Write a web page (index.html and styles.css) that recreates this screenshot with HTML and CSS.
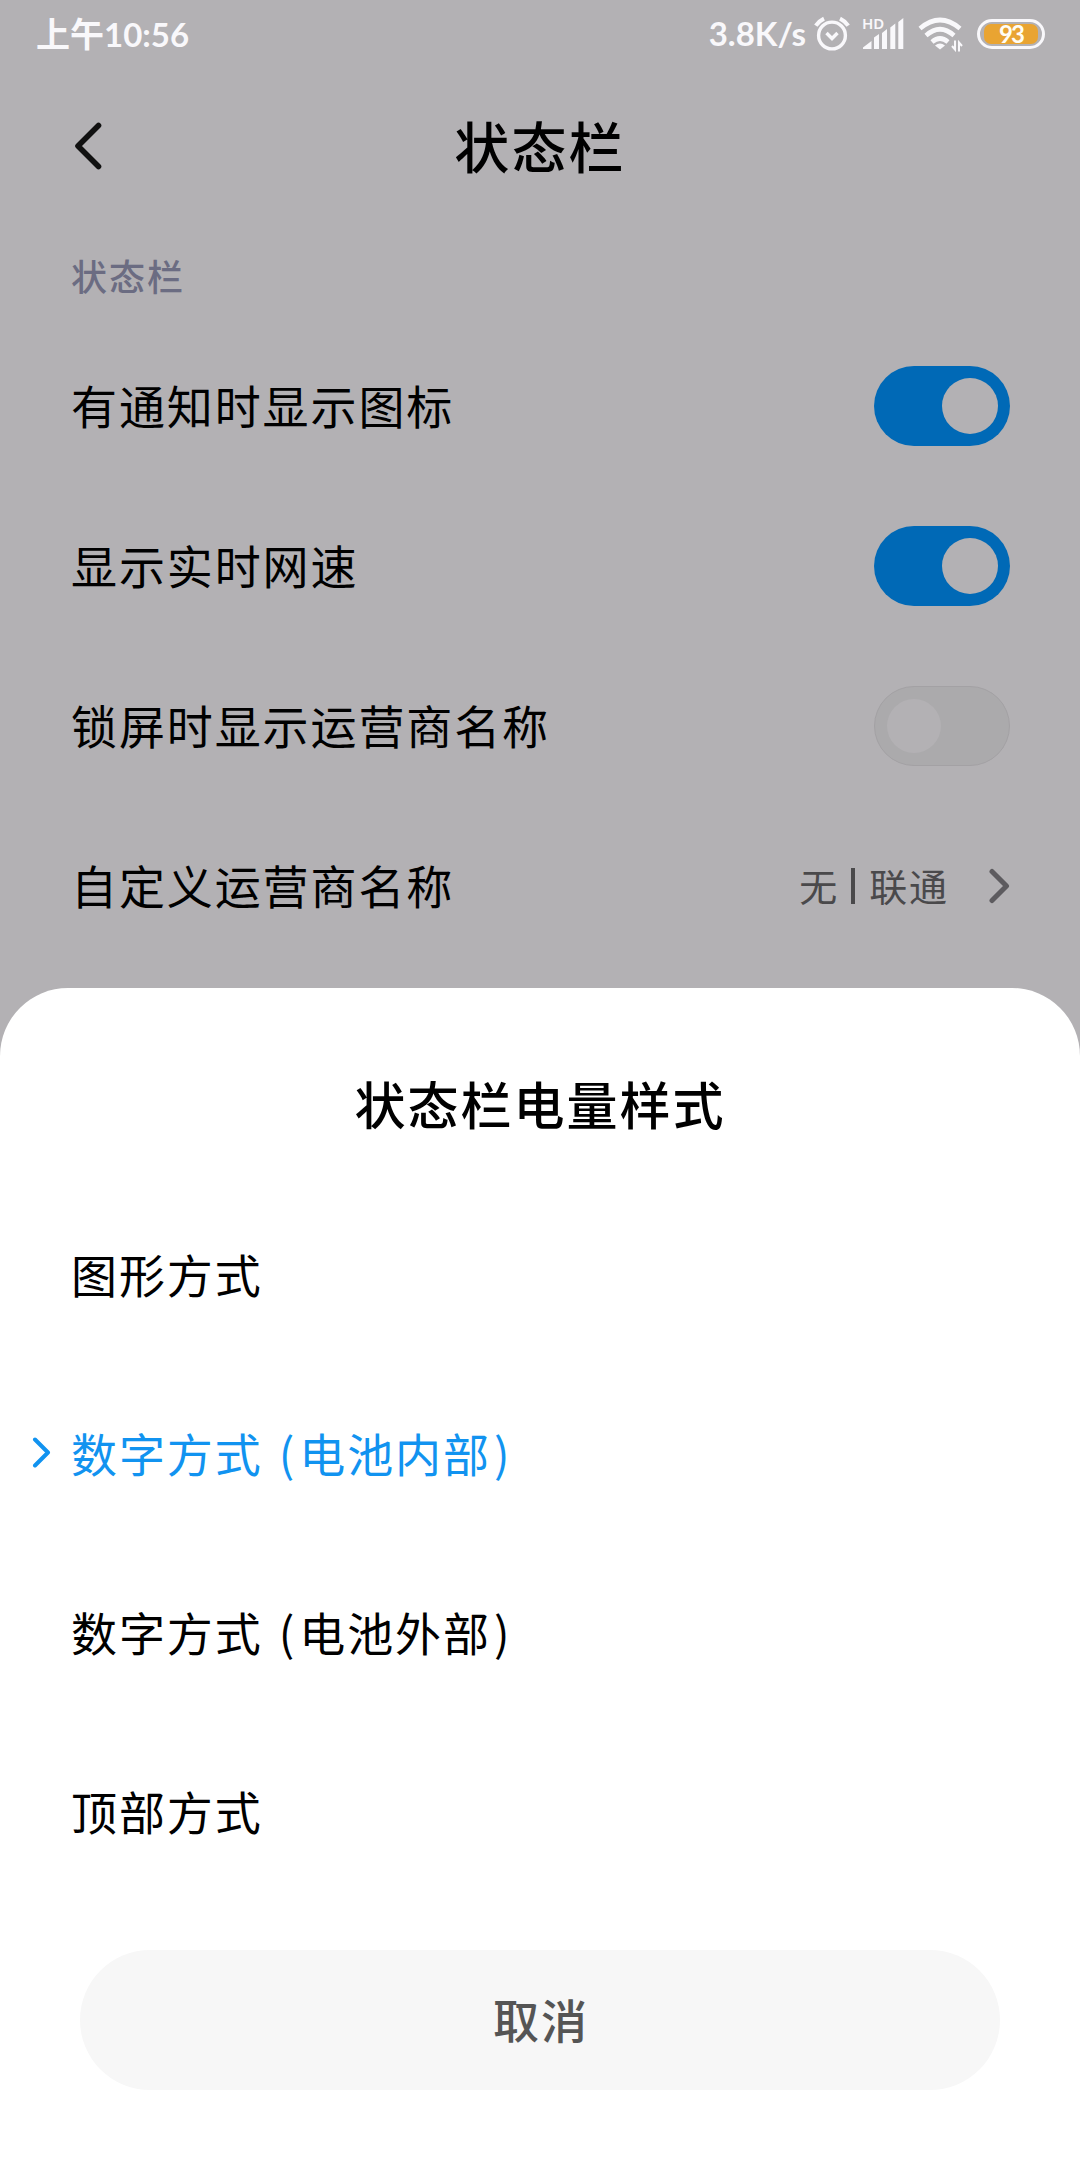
FILE: index.html
```html
<!DOCTYPE html>
<html lang="zh-CN">
<head>
    <meta charset="UTF-8">
    <meta name="viewport" content="width=device-width, initial-scale=1.0">
    <title>状态栏</title>
    <link rel="stylesheet" href="styles.css">
</head>
<body>
    <div class="status-bar">
        <span class="time">上午<span class="digits">10:56</span></span>
        <div class="status-icons">
            <span class="speed">3.8K/s</span>
            <svg class="icon-alarm" width="36" height="36" viewBox="0 0 36 36" fill="none" stroke="#f9f8fb" stroke-width="3.4">
                <circle cx="18" cy="19.5" r="13.4"/>
                <path d="M12.500 17l5.500 5.500 5.500-5.500"/>
                <path d="M1.800 9.600Q5 5 10 2.600M34.200 9.600Q31 5 26 2.600" stroke-width="4"/>
            </svg>
            <div class="signal">
                <span class="hd">HD</span>
                <svg width="42" height="32" viewBox="0 0 42 32" fill="#f9f8fb">
                    <path d="M1 31v-1.500L9.500 23v8zM12 31V19.500l5-3.500v15zM20 31V15l5-4v20zM28.300 31V9.500l5-4V31zM36.300 31V4l5-4v31z"/>
                </svg>
            </div>
            <svg class="icon-wifi" width="46" height="36" viewBox="0 0 46 36" fill="none" stroke="#f9f8fb" stroke-width="4.600">
                <path d="M3 12.500Q23-4.500 43 12.500M9 19.500Q23 7 37 19.500M15 26Q23 19 31 26"/>
                <path d="M18 29.500Q23 25.500 28 29.500L23 33.500z" fill="#f9f8fb" stroke="none"/>
                <path d="M38 24.500v9l-3-3.500M42 35.500v-9l3 3.500" stroke-width="2"/>
            </svg>
            <div class="battery"><span class="level">93</span></div>
        </div>
    </div>

    <div class="header">
        <svg class="back" width="32" height="52" viewBox="0 0 32 52" fill="none" stroke="#111" stroke-width="5.600" stroke-linecap="round" stroke-linejoin="round">
            <path d="M26.500 5.500L6 26l20.500 20.500"/>
        </svg>
        <h1>状态栏</h1>
    </div>

    <div class="settings">
        <div class="group-title">状态栏</div>
        <div class="row">
            <span class="label">有通知时显示图标</span>
            <div class="switch on"><div class="knob"></div></div>
        </div>
        <div class="row">
            <span class="label">显示实时网速</span>
            <div class="switch on"><div class="knob"></div></div>
        </div>
        <div class="row">
            <span class="label">锁屏时显示运营商名称</span>
            <div class="switch"><div class="knob"></div></div>
        </div>
        <div class="row">
            <span class="label">自定义运营商名称</span>
            <div class="value">
                <span class="label">无</span><i class="divider"></i><span class="label">联通</span>
                <svg class="arrow" width="22" height="36" viewBox="0 0 22 36" fill="none" stroke="#5d5b5f" stroke-width="5" stroke-linecap="round" stroke-linejoin="round">
                    <path d="M4 3.500L18.500 18 4 32.500"/>
                </svg>
            </div>
        </div>
    </div>

    <div class="sheet">
        <h2>状态栏电量样式</h2>
        <div class="option">图形方式</div>
        <div class="option selected">
            <svg class="mark" width="20" height="32" viewBox="0 0 20 32" fill="none" stroke="#1193f0" stroke-width="4" stroke-linecap="round" stroke-linejoin="round">
                <path d="M4 2.500L17 15.500 4 28.500"/>
            </svg>
            数字方式 <span class="paren">(</span>电池内<span class="paren">部</span>)
        </div>
        <div class="option">数字方式 <span class="paren">(</span>电池外<span class="paren">部</span>)</div>
        <div class="option">顶部方式</div>
        <button class="cancel">取消</button>
    </div>
</body>
</html>
```
FILE: styles.css
```css
* {
    margin: 0;
    padding: 0;
    box-sizing: border-box;
}
body {
    position: relative;
    width: 1080px;
    height: 2160px;
    overflow: hidden;
    background-color: #b3b1b4;
    color: #000;
    font-family: "Noto Sans CJK SC", sans-serif;
}
.status-bar {
    display: flex;
    justify-content: space-between;
    height: 68px;
    padding: 0 35px 0 36px;
    color: #f9f8fb;
    align-items: center;
}
.time {
    padding-bottom: 2px;
    font-size: 34px;
    font-weight: 700;
    line-height: 64px;
}
.digits, .speed {
    font-family: Lato, sans-serif;
    font-size: 33px;
    font-weight: 700;
}
.status-icons {
    display: flex;
    align-items: center;
    height: 66px;
}
.speed {
    padding-bottom: 2px;
    margin-right: 8px;
}
.signal {
    position: relative;
    display: flex;
    margin-left: 12px;
    margin-right: 13px;
}
.hd {
    position: absolute;
    left: 0;
    top: -4px;
    font-family: "Noto Sans", sans-serif;
    font-size: 15px;
    font-weight: 600;
    line-height: 18px;
}
.battery {
    display: flex;
    width: 68px;
    height: 30px;
    margin-left: 14px;
    padding: 2px 4px;
    border: 3px solid #f9f8fb;
    border-radius: 15px;
}
.level {
    flex: 1;
    background-color: #e9a432;
    border-radius: 7px;
    color: #fffdf5;
    font-family: Lato, sans-serif;
    font-size: 24px;
    font-weight: 700;
    line-height: 20px;
    letter-spacing: -2px;
    text-align: center;
}
.header {
    display: flex;
    align-items: center;
    height: 156px;
    padding: 0 72px;
}
.back {
    flex: none;
}
h1 {
    flex: 1;
    margin-right: 32px;
    padding-bottom: 5px;
    font-size: 55px;
    font-weight: 500;
    letter-spacing: 2.2px;
    text-align: center;
}
.settings {
    padding: 0 70px 0 71px;
}
.group-title {
    height: 102px;
    font-size: 36px;
    font-weight: 500;
    line-height: 102px;
    letter-spacing: 2px;
    color: #6b6c82;
}
.row {
    display: flex;
    align-items: center;
    justify-content: space-between;
    height: 160px;
    font-size: 46px;
    letter-spacing: 1.9px;
}
.label {
    padding-bottom: 4px;
}
.switch {
    width: 136px;
    height: 80px;
    padding: 12px;
    border: 1px solid #a3a1a4;
    border-radius: 40px;
    background-color: #abaaac;
}
.knob {
    width: 54px;
    height: 54px;
    border-radius: 50%;
    background-color: #b3b1b4;
}
.switch.on {
    padding: 12px;
    border: none;
    background-color: #0069b6;
}
.switch.on .knob {
    width: 56px;
    height: 56px;
    margin-left: auto;
}
.value {
    display: flex;
    align-items: center;
    font-size: 38px;
    color: #4a494b;
}
.divider {
    width: 4px;
    height: 36px;
    margin: 0 14px 0 12px;
    background-color: #4a494b;
}
.arrow {
    margin-left: 39px;
}
.sheet {
    position: absolute;
    left: 0;
    right: 0;
    bottom: 0;
    height: 1172px;
    padding-top: 70px;
    border-radius: 68px 68px 0 0;
    background-color: #fff;
}
h2 {
    height: 128px;
    font-size: 51px;
    font-weight: 500;
    line-height: 91px;
    letter-spacing: 2px;
    text-align: center;
}
.option {
    position: relative;
    height: 179px;
    padding-left: 71px;
    font-size: 46px;
    line-height: 174px;
    letter-spacing: 1.9px;
    word-spacing: 4px;
}
.selected {
    color: #1193f0;
}
.paren {
    margin-right: 3px;
}
.mark {
    position: absolute;
    left: 31px;
    top: 72px;
}
.cancel {
    display: block;
    width: 920px;
    height: 140px;
    margin: 48px auto 0;
    padding: 0 0 4px 2px;
    border: none;
    border-radius: 70px;
    background-color: #f7f7f7;
    color: #555;
    font-family: inherit;
    font-size: 46px;
    font-weight: 500;
    letter-spacing: 2px;
}
```
